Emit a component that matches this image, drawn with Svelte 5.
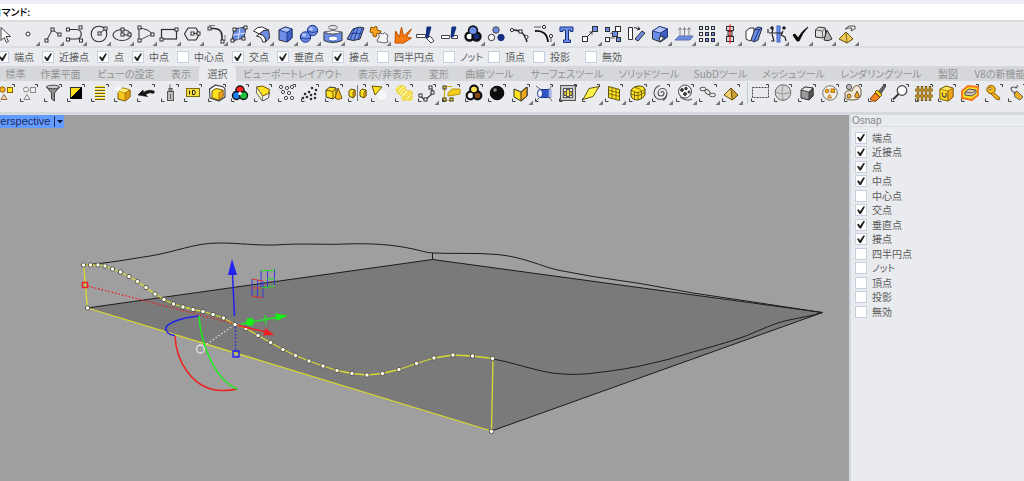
<script>
  let command = $state('');
  let activeTab = $state('選択');

  let snaps = $state([
    { label: '端点', on: true },
    { label: '近接点', on: true },
    { label: '点', on: true },
    { label: '中点', on: true },
    { label: '中心点', on: false },
    { label: '交点', on: true },
    { label: '垂直点', on: true },
    { label: '接点', on: true },
    { label: '四半円点', on: false },
    { label: 'ノット', on: false },
    { label: '頂点', on: false },
    { label: '投影', on: false },
    { label: '無効', on: false }
  ]);

  const slot = (label) => (label === 'ノット' ? 2 : label.length);

  const tabs = [
    '標準', '作業平面', 'ビューの設定', '表示', '選択', 'ビューポートレイアウト', '表示/非表示', '変形',
    '曲線ツール', 'サーフェスツール', 'ソリッドツール', 'SubDツール', 'メッシュツール',
    'レンダリングツール', '製図', 'V8の新機能'
  ];

  // Drawing helpers; every icon lives on a 24 x 24 grid.
  const K = '#2f2f2f';
  const p = (d, fill = 'none', stroke = K, w = 1) =>
    `<path d="${d}" fill="${fill}" stroke="${stroke}" stroke-width="${w}" stroke-linejoin="round"/>`;
  const c = (x, y, r, fill = 'none', stroke = K, w = 1) =>
    `<circle cx="${x}" cy="${y}" r="${r}" fill="${fill}" stroke="${stroke}" stroke-width="${w}"/>`;
  const n = (x, y, fill = '#fff') =>
    `<rect x="${x - 1.5}" y="${y - 1.5}" width="3" height="3" fill="${fill}" stroke="${K}"/>`;
  const r = (x, y, w, h, fill = 'none', stroke = K, sw = 1) =>
    `<rect x="${x}" y="${y}" width="${w}" height="${h}" fill="${fill}" stroke="${stroke}" stroke-width="${sw}"/>`;

  const blue = '#6d8ee8';
  const pale = '#b9c9fa';
  const deep = '#3f62c4';
  const navy = '#16307f';
  const yel = '#ffe21f';
  const gold = '#f0a818';

  const mainTools = [
    { name: '選択ツール', art: p('M8 5.500v13l3-3 2.500 5 2-1-2.500-5h4.500z', '#fff', '#444') },
    { name: '点', more: true, art: c(12, 12, 2, '#fff') },
    { name: 'ポリライン', more: true, art: p('M6.500 18.500l6-11 7 5.500') + n(6.5, 18.5) + n(12.5, 7.5) + n(19.5, 12.5) },
    { name: '曲線', more: true, art: p('M5 7.500h8c7 0 7 9.500 0 9.500h-8', 'none', K, 1.2) + n(5, 7.5) + n(17.5, 5.5) + n(5, 17.5) + n(18, 18.5) },
    { name: '円', more: true, art: c(12, 12, 7.8, 'none', K, 1.1) + p('M12 12l6-5') + n(12.5, 11.5) + n(18.5, 6.5) },
    { name: '楕円', more: true, art: '<ellipse cx="12" cy="13" rx="9" ry="5.500" fill="none" stroke="#2f2f2f" stroke-width="1.100"/>' + p('M12 13V7M12 13h8') + n(12.5, 12.5) + n(12.5, 7.5) + n(19.5, 12.5) },
    { name: '円弧', more: true, art: p('M6 6v12.500M6 6q10 1 13 6') + p('M6 18.500l13-6.500', 'none', '#555') + n(6.5, 5.5) + n(6.5, 18.5) + n(19.5, 12.5) },
    { name: '長方形', more: true, art: r(4.5, 7.5, 15, 9.5, 'none', K, 1.2) + n(4.5, 17.5) + n(19.5, 7.5) },
    { name: 'ポリゴン', more: true, art: p('M8 6h8l3.500 6-3.500 6H8L4.500 12z', 'none', K, 1.1) + n(12.5, 11.5) + n(18.5, 11.5) + p('M14 11.500h3') },
    { name: 'フィレット', more: true, art: p('M5 6.500h5q8 0 8 8v5', 'none', K, 1.6) + p('M5 3.500h6M21 13v6', 'none', '#777') + n(5.5, 6.5) + n(18.5, 19.5) },
    { name: 'サーフェス', more: true, art: p('M7 7l12-2-2 11-12 3z', blue) + p('M13 6l-2 12M6 13l12-2', 'none', '#dce5ff') + n(7.5, 7.5) + n(18.5, 5.5) + n(16.5, 16.5) + n(5.5, 18.5) },
    { name: '曲面', more: true, art: p('M3.500 9q4-5 9-4l6 3q-5-1-9 4z', '#fff') + p('M9.500 12q4-5 9-4 1 4 1 8l-4 4q1-6-6-8z', blue) + p('M9.500 12q7 2 6 8h-3q0-5-6-6z', '#fff') },
    { name: '直方体', more: true, art: p('M5 8l6-3 7 2v9l-5 4-8-2z', blue) + p('M5 8l6-3 7 2-5 3.500z', '#b3c4fb', navy, 0.8) + p('M13 10.500L18 7v9l-5 4z', deep, navy, 0.8) },
    { name: '球', more: true, art: c(15.5, 8.5, 5.2, blue, navy) + c(14, 7, 1.8, pale, 'none') + c(8.5, 15, 5.2, blue, navy) + c(7, 13, 1.8, pale, 'none') + p('M3.500 16q5 2 10 0M11 9.500q5 2 9.500 0', 'none', navy, 0.8) },
    { name: '円柱', more: true, art: '<ellipse cx="12" cy="5.500" rx="4.500" ry="2" fill="none" stroke="#666"/>' + p('M3 10v8.500q9 4 18 0V10q-9 4-18 0z', blue, K) + p('M3 10q9-3 18 0-9 4-18 0z', '#f4f6ff', '#666') + '<ellipse cx="12" cy="16.500" rx="4.500" ry="2.500" fill="#fff" stroke="#3f62c4"/>' },
    { name: 'メッシュ', more: true, art: p('M3 17l6-10q7-3 11-1l-4 11q-7 3-13 0z', blue) + p('M10 18l4-12M6 12q6-2 12 0M6 18L11 6M14 18l4-12', 'none', navy, 0.8) },
    { name: 'ブロック', more: true, art: p('M4 5l3 1q1-3 3-1v3l4 1-1 3-3-1-1 4-3-1v-3l-3-1z', '#fba31c', '#8a5600') + p('M12 11l4 1q2-3 3 0l2 1-1 4 1 3-4 1-4-1q-3 1-3-2l2-2z', '#f4f4f4', '#666') },
    { name: '分解', art: p('M4 21L4.500 9l4 6 2-10 2 9 8-7-5 8 5 1-8 5z', '#f77a13', '#c24d00') },
    { name: 'トリム', art: p('M2.500 12.500h9v3h-9zM12 13l5 2 3 4-3 2-4-4z', '#fff', '#444') + p('M13 5h4l-3 11h-2z', navy, navy) },
    { name: '分割', art: p('M3.500 13.500h8v3h-8zM13.500 13.500h6v3h-6z', '#fff', '#444') + p('M14 5h4l-3 10h-2z', navy, navy) },
    { name: 'グループ', more: true, art: c(12, 8.5, 4, '#111', '#111', 2.4) + c(8.5, 14.5, 4, '#fff', '#111', 2.4) + c(15.5, 14.5, 4, navy, '#111', 2.4) + c(12, 8.5, 3.6, blue, 'none') },
    { name: 'グループ解除', art: c(12, 8, 3.2, blue, '#444') + c(7.5, 15.5, 3.2, '#fff') + c(17, 15.5, 3.2, navy, navy) },
    { name: '制御点', art: p('M4 8q12-1 15 12', 'none', '#222', 1.4) + n(12.5, 9.5) + c(18.5, 15, 1.6, '#fff') + c(4, 8, 1.6, '#fff') },
    { name: '接線', more: true, art: p('M4 9q12-1 13 11', 'none', '#111', 1.8) + p('M3 5h7M20 16v4', 'none', '#555') + c(13, 5, 1.6, '#fff') + c(20, 14, 1.6, '#fff') },
    { name: 'テキスト', art: p('M5 5h13v4.500h-2.500V8h-2v10h2v2.500h-7V18h2V8h-2.500v1.500H5z', blue, navy) },
    { name: '移動', more: true, art: r(4.5, 14.5, 5, 5, '#fff') + r(14.5, 4.5, 5, 5, blue) + p('M10 14l4-4M11.500 10h2.500v2.500') },
    { name: '配列コピー', art: r(4.5, 5.5, 4, 4, blue) + r(14.5, 4.5, 5, 5, '#fff') + r(11.5, 9.5, 5, 5, blue) + r(4.500, 15.5, 4, 4, '#fff') + r(15.5, 15.5, 4, 4, blue) + p('M9 12l3-2M9 16h5', 'none', '#666') },
    { name: '回転', art: p('M3.500 5.500h4v12h-4z', '#fff') + p('M10 17l7-8 3 2-7 8z', blue) + p('M9 5.500l6 1.500M13 4.500l2 2.500-3 1') },
    { name: 'ソリッド編集', more: true, art: p('M4.500 9l7-4.500 8 2.500v8l-7 5-8-3z', blue) + p('M4.500 9l7-4.500 8 2.500-7 4z', '#b3c4fb', navy, 0.8) + p('M12.500 11l7-4v8l-3 2v-3l-4 2z', deep, navy, 0.8) + p('M11 15.500l4-1.500v3l-3 2.500z', '#fff') },
    { name: '押し出し', more: true, art: p('M3 18l4-4h14l-3 4z', blue, '#5a6ba8') + p('M8 14V6M12.500 14V6M17 14V6M6.500 8L8 5.500 9.500 8M11 8l1.500-2.500L14 8M15.500 8L17 5.500 18.500 8', 'none', '#888') },
    { name: '配列', more: true, art: [5.5, 11.5, 17.5].map((y) => [5.5, 11.5, 17.5].map((x) => r(x - 1, y - 1, 3, 3, y < 8 ? '#cbd6fa' : x > 8 ? blue : '#fff')).join('')).join('') },
    { name: '整列', more: true, art: r(8.5, 4.5, 7, 4, '#d8d8d8') + r(10, 9.5, 4, 4, '#d8d8d8') + r(8.5, 14.5, 7, 5, '#d8d8d8') + p('M12 2.500v19', 'none', '#e11', 1.2) },
    { name: 'ひねり', more: true, art: p('M4 9l4-3h4v10l-4 3-4-2z', '#fff') + p('M13 7l3-2 4 1-4 12-4 2-3-2z', blue) + p('M13 7l4 1 3-2M17 8l-5 11', 'none', navy) },
    { name: '変形', more: true, art: r(12, 4, 3, 16, blue, deep) + p('M4 11h14M7 12l2 7H6M18 9l-2 4 4 2 1 4M3 7v4M8 7l-1 4', 'none', '#222', 1.2) + c(7, 6, 1.3, '#111') + c(19, 6, 1.3, '#111') },
    { name: '確認', more: true, art: p('M4 13l2-1 3 4q4-7 10-11-6 6-9 14H8z', '#0a0a0a', '#0a0a0a') },
    { name: '解析', more: true, art: p('M3.500 8l3-3 7 1v8l-3 2-7-1z', '#ddd') + p('M3.500 8l7 1v7M10.500 9l3-3', 'none', '#666') + p('M15 8l5 9q-4 3-8 1z', '#b4b4b4') },
    { name: 'レンダリング', more: true, art: p('M4 17l7-7 7 7-6 4z', '#edc956', '#665010') + p('M11 10l1 11', 'none', '#7d6416') + p('M10 7l4-3h6v3l-4 2 1-3h-3z', '#eee', '#555') }
  ];

  const selectTools = [
    { name: 'すべて選択', art: c(8.5, 8.5, 2.7, '#fbb51e', '#8d5d05') + r(13.5, 6.5, 5, 5, yel, '#8d5d05') + p('M10 13.500l3 5H7z', '#f3d9c0', '#9a6a45') },
    { name: '選択解除', art: c(9, 8.5, 2.5, '#eee', '#888') + r(13.5, 6.5, 5, 5, '#eee', '#888') + p('M10 13.500l3 5H7z', '#eee', '#888') },
    { name: '選択フィルタ', art: p('M5.500 6h13l-5 6v8l-3-2v-6z', '#8f8f8f', '#444') + '<ellipse cx="12" cy="6" rx="6.500" ry="1.800" fill="#ccc" stroke="#444"/>' },
    { name: '選択を反転', art: r(6.5, 6.5, 11, 11, yel) + p('M17.500 6.500v11h-11z', '#000', '#000') },
    { name: 'レイヤで選択', art: [5, 8, 11, 14, 17].map((y) => r(7, y, 10, 1, yel, 'none') + r(7, y + 1, 10, 1, '#6b5f20', 'none')).join('') },
    { name: '最後のオブジェクト', art: p('M7 10l5-3 7 2v7l-5 4-7-2z', '#fbc820', '#6e5208') + p('M7 10l5-3 7 2-5 3z', '#fff27a', '#b98d12', 0.8) + p('M14 12l5-3v7l-5 4z', '#dc9a14', '#a36a08', 0.8) + p('M7 3l1 4 4 1-4 1-1 4-1-4-4-1 4-1z', '#fff', 'none') },
    { name: '前の選択', art: p('M4 14l5-5 .500 2.500q6-4 11-1l-1 2q-4-2-8 1l2 2z', '#111', '#111', 0.6) },
    { name: 'スプレー', art: r(9.5, 10.5, 6, 9, '#bcbcbc', '#555') + r(11, 7.5, 3, 3, '#999', '#555') + p('M12 7V3.500M12.500 13v5', 'none', '#666') },
    { name: 'IDで選択', art: r(5.5, 7.5, 13, 8, '#f5dc40', '#7a6a10') + p('M8.500 9.500v4M11.500 9.500v4h2q2-2 0-4z', 'none', '#222', 1) },
    { name: 'ソリッド', art: p('M4.500 8l6-4 8 2 1.500 2v8l-6 4-9-3z', '#fff', '#333', 1.1) + p('M7 10l4-2.500 7 1.500v6.500l-4 3.500-7-2z', yel, '#6e5208') + p('M14 12l4-3v6.500L14 19z', gold, '#8f5d08', 0.8) },
    { name: '色で選択', art: c(12, 9, 4, '#f22', '#111', 1.4) + c(8.5, 14.5, 4, '#1c7df0', '#111', 1.4) + c(15.5, 14.5, 4, '#20c43c', '#111', 1.4) + c(12, 12.5, 1.7, '#fff', 'none') },
    { name: 'サーフェスを選択', art: p('M5.500 6l13 5-1 6-6 3-6-8z', '#eee', '#555') + p('M5.500 6l6-1 7 3.500-1 4-6 2.500z', yel, '#6e5208') + p('M5.500 6l6 9v5l-6-8z', '#fff8b0', '#777') },
    { name: '点を選択', art: [[6, 6], [12, 7], [17, 6], [8, 11], [14, 12], [11, 17], [17, 17]].map(([x, y]) => c(x, y, 1.6, '#fff', '#444')).join('') },
    { name: '点群を選択', art: [[14, 7], [18, 9], [11, 11], [7, 13], [13, 14], [17, 13], [5, 17], [9, 16], [13, 18], [17, 17]].map(([x, y]) => c(x, y, 1, '#111', '#111', 0.5)).join('') },
    { name: 'ポリサーフェス', art: p('M4 9l4-3 6 1v8l-3 3-7-2z', yel) + p('M4 9l7 1.500V18M11 10.500L14 7', 'none', '#6e5208') + p('M16 7l4 10q-4 3-7 0z', '#f8b91c', '#6e5208') },
    { name: '重複を選択', art: p('M4 10l2-2 4 1v6l-2 2-4-2zM15 10l2-2 4 1v6l-2 2-4-2z', yel, '#5c4608') + p('M19 11l2-2v6l-2 2zM8 11l2-2v6l-2 2z', gold, '#5c4608', 0.7) + p('M12.500 4v16', 'none', '#777') },
    { name: '表示色', art: c(14, 14, 6, '#f6f6f6', '#e4e4e4') + p('M4 5l10 1-7 8z', yel, '#6e5208') },
    { name: 'ハッチング', art: p('M4 8q3-5 8-3l3 5h5v9H10v-5q-5 0-6-6z', '#fff6a0', '#ead02c') + p('M5 10l5-5M6 13l7-7M10 13l4-4M11 17l7-7M12 19l8-8M16 19l4-4', 'none', '#ead02c', 1.2) },
    { name: 'チェーン選択', more: true, art: p('M5 15l5 4 8-7-2-6', 'none', '#444', 1.2) + n(5.5, 14.5) + n(10.5, 18.5) + n(17.5, 11.5) + n(15.5, 6.5) },
    { name: '寸法', art: p('M5.500 6v13M13 5.500H7M13 19.500H7', 'none', '#c9ae10', 1.2) + n(5.5, 6.5, yel) + n(5.5, 18.5, yel) + n(12.5, 18.5, yel) + p('M9 12l4-4h8v5l-5 1-7 1z', '#f4cd1e', '#b9960c') },
    { name: 'グループを選択', art: c(12, 8.5, 3.8, '#ffe04a', '#111', 2.2) + c(8.5, 14.5, 3.8, '#f4f4f4', '#111', 2.2) + c(15.5, 14.5, 3.8, '#8a4c12', '#111', 2.2) + c(12, 8.5, 2.8, '#ffe04a', 'none') },
    { name: '球', art: c(12, 12, 6.8, '#0d0d0d', '#000') + c(10, 9, 1.8, '#888', 'none') },
    { name: '開いたサーフェス', more: true, art: p('M5 8l7 3 6-5v9l-6 5-7-4z', yel) + p('M12 11l6-5v9l-6 5z', gold) },
    { name: '可視範囲', art: r(8, 8.5, 9, 8, '#2f56c4', '#1d3a91') + p('M17 8.500h2v8h-2z', pale, '#8ea2dd') + '<ellipse cx="8" cy="12.500" rx="2.500" ry="4" fill="#f2f5ff" stroke="#1d3a91"/>' + p('M4 5l4 3M20 4.500l-3 4M4 20l4-4M20 20l-3-4', 'none', '#666') },
    { name: 'ブロックを選択', art: r(4.5, 4.5, 15, 15, '#c9c9c9', '#555') + r(7.5, 7.5, 9, 9, '#f2f2f2', '#555') + p('M8 10.500h8v4H8z', '#e8c91e', '#555') + r(10.5, 8.5, 3, 7, '#f8e040', '#555') },
    { name: '平面', more: true, art: p('M10 7.500l10-2-6 10-10 3z', '#fff04a', '#5c5010') },
    { name: 'メッシュ面', more: true, art: p('M6.500 5.500l11 3v11l-11-3z', yel, '#5c5010') + p('M10 6.500v11M14 7.500v11M6.500 9l11 3M6.500 12.500l11 3', 'none', '#7a6a10', 0.9) },
    { name: 'SubD', more: true, art: p('M5 9q3-4 7-4 6 0 7 3v6q-2 4-7 5-6 0-7-4z', yel, '#4a4010') + p('M5 9q4 3 7 2.500 5-1 7-3.500M12 11.500V19M8.500 6.500q5 0 7 3.500v7.500M8.500 11v7M5 13q7 4 14-2', 'none', '#6c5c10', 0.9) },
    { name: 'スパイラル', more: true, art: p('M12 12a1.500 1.500 0 0 1 3 0a3 3 0 0 1-6 0a4.500 4.500 0 0 1 9 0a6.500 6.500 0 0 1-13 0a8 8 0 0 1 6-7.500M18 12q0 5-4 7.500', 'none', '#555', 1.1) },
    { name: 'リール', more: true, art: c(12, 10.5, 6.5, '#f2f2f2', '#444') + c(9, 9, 1.4, '#444') + c(13, 7.5, 1.2, '#444') + c(12, 13, 1.4, '#444') + c(16, 11, 1, '#444') + p('M7 16q7 5 12 2', 'none', '#444') },
    { name: '鎖', more: true, art: '<ellipse cx="7" cy="8" rx="3" ry="1.800" fill="#eee" stroke="#555"/><ellipse cx="11.500" cy="11" rx="3" ry="1.800" fill="#eee" stroke="#555" transform="rotate(45 11.500 11)"/><ellipse cx="16.500" cy="14" rx="3" ry="1.800" fill="#eee" stroke="#555"/>' },
    { name: 'ピラミッド', more: true, art: p('M5 14l7-7 7 7-6 5z', '#f0d070', '#665010') + p('M12 7l7 7-6 5z', '#d0a030', '#665010') },
    { name: '窓選択', gap: true, art: '<rect x="4.500" y="6.500" width="16" height="10" fill="none" stroke="#444" stroke-dasharray="2 1"/>' },
    { name: '球で選択', art: c(12, 11.5, 7.8, '#d4d4d4', '#666') + p('M4.500 11.500q8 3 15 0M12 4q-2 8 0 15', 'none', '#999') },
    { name: '箱で選択', art: p('M6 9l4-3 8 1v8l-4 4-8-2z', '#999') + p('M6 9l4-3 8 1-4 4z', '#e6e6e6', K, 0.8) + p('M14 11l4-4v8l-4 4z', '#555', K, 0.8) },
    { name: '円で選択', art: c(12, 12, 7.3, '#f4efe6', '#777') + c(9, 10, 1.8, gold, '#b8780c') + r(13, 8, 3.5, 3.5, gold, '#b8780c') + p('M11.500 13.500l2 3.500h-4z', '#f6c9a4', '#b8780c') },
    { name: '投げ縄選択', art: p('M4 12q1-3 7-2 2-7 7-5 3 3 2 9-1 5-8 5-8 0-8-3z', '#f3ead8', '#6d5a3a') + c(8, 6, 2.6, '#bbb', '#555') + c(8, 15, 2, '#f0b429', '#6d5a3a') + p('M16 10l2.500 5.500q-2.500 3-5 0z', '#f6a61c', '#6d5a3a') },
    { name: 'ブラシ', art: p('M13 11l6-7 1.500 1.500-5 8z', '#666', '#444') + p('M10 12l5 4-4 4q-4 1-6-2z', '#f58220', '#7d3c08') + p('M10 11l5 5 2-2-5-5z', '#f6d21c', '#7d5c08') },
    { name: '検索', art: c(14, 9.5, 4.8, '#fafafa', '#444', 1.2) + p('M10.500 13L5 18.500', 'none', '#333', 1.8) },
    { name: 'フェンス', art: p('M3 9h18M3 15h18', 'none', '#6d4d10', 2.4) + p('M6 5v15M10 5v15M14 5v15M18 5v15', 'none', '#6d4d10', 2.4) + p('M3 9h18M3 15h18M6 6v13M10 6v13M14 6v13M18 6v13', 'none', '#d9a82c', 1) },
    { name: 'ユーザーテキスト', art: p('M5 8l6-3 7 2v9l-5 4-8-2z', '#ffe95a', '#6e5208') + p('M5 8l8 2v10l-8-2z', '#fbd823', '#8f7010', 0.8) + p('M13 10l5-3v9l-5 4z', gold, '#8f5d08', 0.8) + p('M7.500 11.500v3.500q2 2 3.500 .500v-3.500', 'none', '#444', 1.1) },
    { name: '選択ハイライト', art: p('M4 10l6-5 10 1v8l-6 5-10-2z', yel, '#f5761a', 1.8) + p('M7 11l4-3 7 1v3l-4 3-7-1z', '#d6c4b6', '#555') + p('M7 11l7 1 4-3', 'none', '#666') },
    { name: 'キー', art: p('M11 11l7 6-1 2-3-1-6-6z', '#f2ae1c', '#8a5c06') + c(9, 8.5, 4.2, '#f8b820', '#8a5c06') + c(8, 7.5, 1.2, '#fff', '#8a5c06') },
    { name: 'タグ', art: p('M9 12l3-2 6 6-3 3-5-3z', '#f2ae1c', '#666') + p('M11 12q-5-1-5-5 3-2 5 0 2-1 1-3', 'none', '#555', 1.1) }
  ];

  const brackets = 'M18 3.500h2.500V6M3.500 17.500V20.500H6.500';

  // Control points along the selected edge curve.
  const curve = [
    [83.5, 265], [90.5, 265], [98, 265], [105, 266], [112.5, 269], [120.5, 272], [129, 276.5], [137.5, 281.5],
    [146, 287.5], [155, 294], [164, 299.5], [173.5, 304], [183, 307], [193, 309.5], [203, 311.5], [213, 314.5],
    [223.5, 318], [235, 324.5], [246, 328.5], [258, 335.5], [270.5, 342.5], [283, 349.5], [295.5, 355.5],
    [309, 361], [323, 366], [337, 370.5], [352, 373.5], [367, 375], [382.5, 373.5], [399, 369.5],
    [416.5, 363.5], [434, 358], [453, 355], [472.5, 356], [492.5, 358.5]
  ];
  const outline = curve.map((q) => q.join(',')).join(' ');
  const handles = [...curve, [87.5, 308], [491.5, 431.5]];
</script>

{#snippet tool(item, framed)}
  <button class="tool" class:gap={item.gap} aria-label={item.name}>
    <svg viewBox="0 0 24 24" width="24" height="24" aria-hidden="true">
      {#if framed}<path d={brackets} fill="none" stroke="#444" />{/if}
      {@html item.art}
      {#if item.more}<path d="M24 19.500v4.500h-4.500z" fill="#777" />{/if}
    </svg>
  </button>
{/snippet}

<div class="app">
  <header>
    <div class="command">
      <label for="command">コマンド:</label>
      <input id="command" type="text" bind:value={command} autocomplete="off" />
    </div>

    <div class="toolbar main">
      {#each mainTools as item}{@render tool(item, false)}{/each}
    </div>

    <div class="snapbar">
      {#each snaps as snap}
        <label class="snap w{slot(snap.label)}">
          <input type="checkbox" bind:checked={snap.on} />
          <span>{snap.label}</span>
        </label>
      {/each}
    </div>

    <div class="tabs" role="tablist">
      {#each tabs as tab}
        <button
          role="tab"
          class="tab"
          class:active={tab === activeTab}
          aria-selected={tab === activeTab}
          onclick={() => (activeTab = tab)}>{tab}</button>
      {/each}
    </div>

    <div class="toolbar select">
      {#each selectTools as item}{@render tool(item, true)}{/each}
    </div>
  </header>

  <div class="workspace">
    <main class="viewport">
      <svg class="scene" viewBox="0 115 849 366" fill="none" stroke-linejoin="round" aria-hidden="true">
        <path d="M87 308L432.500 259.500 822.500 312.500 491.500 431z" fill="#7a7a7a" />
        <path d="M87 308L432.500 259.500 822.500 312.500 491.500 431" stroke="#1c1c1c" />
        <path
          d="M83 265C110 263 130 259 150 256C175 252 195 243 218 243C240 243 255 245.500 275 245C300 243 325 245 345 244C375 243 395 245 413 249C422 251 426 252.500 433 253C455 254 475 252.500 497 254.500C525 257 542 267 560 270.500L593 276.500 640 283.500 693 293 753 302 822 312.500M432.500 253v6.500"
          stroke="#1c1c1c" />
        <path
          d="M493 359C515 363 533 370 552 373C565 374.500 577 375 590 373.500C612 371 634 368 653 363C672 359 685 354 700 350C718 345 735 340 747 335.500C760 330 775 323 787 320.500C800 317.500 812 316 822 312.500"
          stroke="#1c1c1c" />

        <g stroke="#d9d930" stroke-width="1.3">
          <path d="M83.500 265L87.500 308 491.500 431 493 359" />
          <polyline points={outline} />
        </g>

        <path d="M88 286L235 324" stroke="#ee2020" stroke-dasharray="1.500 2" stroke-width="1.300" />
        <path d="M235.500 327v23" stroke="#2222ee" stroke-dasharray="1.500 2" stroke-width="1.300" />
        <path d="M204 346L233 326" stroke="#e4e4e4" stroke-dasharray="1.500 2" stroke-width="1.200" />
        <circle cx="200.500" cy="349" r="4" stroke="#e4e4e4" stroke-width="1.300" />

        <path d="M199 316C178 318 162 325 166.500 331C168 334 171 335 175 335.500" stroke="#2222ee" stroke-width="1.500" />
        <path d="M175 336C176 360 192 391 224 390.500Q231 390.500 237 389" stroke="#f02020" stroke-width="1.500" />
        <path d="M199 316C201 347 216 380 237 389" stroke="#18ee18" stroke-width="1.500" />

        <path d="M252 279v17M257.500 280v18M263 281v17M261 271v17M267.500 270v18M274.500 269v16" stroke="#3838d8" />
        <path d="M252 279l11 2M252 288h11M252 296l11 2" stroke="#e03030" />
        <path d="M261 271l14-1M267 279h8M261 288l14-2" stroke="#22dd22" />

        {#each handles as [x, y]}
          <circle cx={x} cy={y} r="2.200" fill="#fffff2" stroke="#4a4a3c" stroke-width="0.900" />
        {/each}

        <rect x="82.500" y="282.500" width="5" height="5" stroke="#f02020" stroke-width="1.400" />
        <rect x="233" y="351" width="6" height="6" stroke="#2222ee" stroke-width="1.400" />
        <path d="M234.500 316L232.500 274" stroke="#2222ee" stroke-width="1.500" />
        <path d="M232 259l5 16h-9z" fill="#2222ee" />
        <path d="M241 324L276 317.500M265 315l1 9" stroke="#18ee18" stroke-width="1.300" />
        <circle cx="250" cy="322" r="4" fill="#18ee18" />
        <path d="M288 315.500L275 313.500 276.500 321z" fill="#18ee18" />
        <path d="M238 325.500L266 332" stroke="#f02020" stroke-width="1.400" />
        <path d="M274.500 335L265.500 328 263 335.500z" fill="#f02020" />
      </svg>
      <button class="title"><span>Perspective</span><i></i></button>
    </main>

    <aside>
      <h2>Osnap</h2>
      <div class="list">
        {#each snaps as snap}
          <label class="snap">
            <input type="checkbox" bind:checked={snap.on} />
            <span>{snap.label}</span>
          </label>
        {/each}
      </div>
    </aside>
  </div>
</div>

<style>
  :global(body) {
    margin: 0;
    overflow-x: hidden;
  }
  .app {
    display: flex;
    flex-direction: column;
    min-height: 100vh;
    overflow: hidden;
    background: #e9ebef;
    color: #5a5a5a;
    font: 10px/14px "Noto Sans CJK JP", sans-serif;
    font-feature-settings: "palt";
  }
  button {
    padding: 0;
    border: 0;
    background: none;
    font: inherit;
    color: inherit;
  }
  .command {
    display: flex;
    align-items: center;
    height: 16px;
    border-top: 4px solid #eff0f5;
    border-bottom: 2px solid #d9dbdf;
    background: #fff;
  }
  .command label {
    margin-left: -8px;
    font-weight: 500;
    color: #000;
    white-space: nowrap;
  }
  .command input {
    flex: 1;
    min-width: 0;
    height: 15px;
    padding: 0 4px;
    border: 0;
    outline: 0;
    background: none;
    font: inherit;
  }
  .toolbar {
    display: flex;
    margin-left: -7px;
    height: 24px;
  }
  .toolbar.select {
    margin-left: -6px;
    height: 31px;
    border-bottom: 3px solid #d5d8dd;
  }
  .tool {
    display: flex;
    flex: none;
    justify-content: center;
    width: 23px;
    height: 24px;
  }
  .tool:nth-child(5n + 2),
  .tool:nth-child(5n + 4) {
    width: 24px;
  }
  .tool.gap {
    margin-left: 5px;
    box-shadow: -2px 0 0 -1px #c3c9d8;
  }
  .tool svg {
    flex: none;
    overflow: visible;
  }
  .snapbar {
    display: flex;
    align-items: center;
    height: 18px;
    margin-left: -3px;
    border-top: 2px solid #dcdee2;
  }
  .snap {
    display: flex;
    flex: none;
    align-items: center;
    gap: 5px;
    white-space: nowrap;
  }
  .w1 { width: 35px; }
  .w2 { width: 45px; }
  .w3 { width: 55px; }
  .w4 { width: 66px; }
  .snapbar .snap:nth-last-child(2) {
    width: 52px;
  }
  .snap input {
    appearance: none;
    display: grid;
    place-items: center;
    width: 12px;
    height: 12px;
    margin: 0;
    border: 1px solid #c6cfe2;
    background: #fff;
  }
  .snap input:checked::after {
    content: "";
    width: 8px;
    height: 8px;
    background: #222;
    clip-path: polygon(0 50%, 20% 40%, 38% 65%, 82% 4%, 100% 10%, 50% 100%, 32% 100%);
  }
  .tabs {
    display: grid;
    grid-template-columns: 33px 57px 74px 36px 37px 113px 72px 36px 65px 90px 74px 69px 77px 98px 36px 68px;
    height: 15px;
    padding-left: 4px;
    margin-left: -5px;
    background: #d5d7db;
  }
  .tab {
    padding-top: 1px;
    line-height: 14px;
    white-space: nowrap;
    color: #929292;
  }
  .tab.active {
    border-radius: 4px 4px 0 0;
    background: #e9ebef;
    color: #666;
  }
  .workspace {
    display: flex;
    flex: 1;
  }
  .viewport {
    position: relative;
    flex: 1;
    min-width: 0;
    background: #9f9f9f;
  }
  .scene {
    display: block;
    width: 100%;
    height: auto;
  }
  .title {
    position: absolute;
    top: 0;
    left: 0;
    display: flex;
    align-items: center;
    height: 13px;
    padding-right: 1px;
    background: #649bff;
    color: #1d2c60;
    font: 11px/13px "Liberation Sans", sans-serif;
  }
  .title span {
    margin-left: -7px;
    padding-right: 4px;
    border-right: 1px solid #1d2c60;
    line-height: 11px;
  }
  .title i {
    width: 7px;
    height: 4px;
    margin-left: 1px;
    background: #101c48;
    clip-path: polygon(0 0, 100% 0, 50% 100%);
  }
  aside {
    flex: 0 0 173px;
    border-left: 2px solid #d3d7e0;
  }
  h2 {
    margin: 0;
    padding-left: 1px;
    border-bottom: 1px solid #dadde2;
    font: 10px/11px "Liberation Sans", sans-serif;
    color: #858585;
  }
  .list {
    padding: 3px 0 0 4px;
  }
  .list .snap {
    height: 15px;
  }
  .list .snap:nth-child(2n) {
    height: 14px;
  }
</style>
